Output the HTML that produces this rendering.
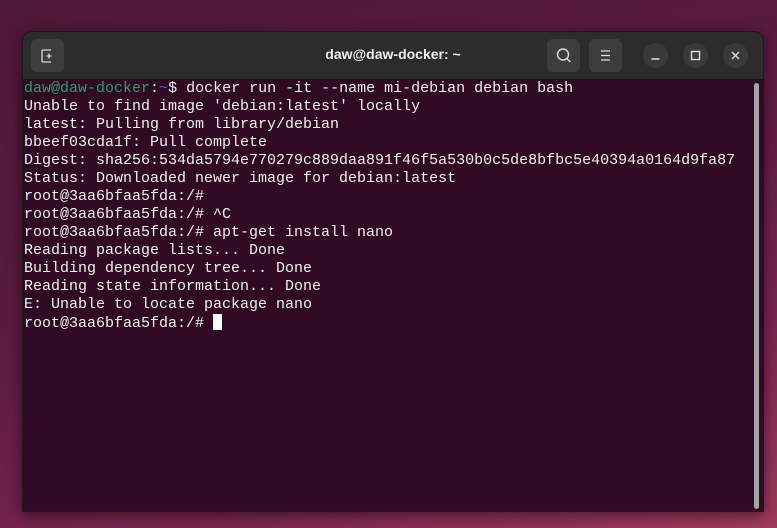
<!DOCTYPE html>
<html><head><style>
html,body{margin:0;padding:0}
body{width:777px;height:528px;overflow:hidden;position:relative;
background:linear-gradient(160deg,#4e1838 0%,#5a1a40 40%,#7a2550 75%,#a03a5a 100%);
font-family:"Liberation Sans",sans-serif}
.win{position:absolute;left:22px;top:31px;width:742px;height:481px;border-radius:10px 10px 0 0;overflow:hidden;background:#300a24;box-shadow:0 3px 14px rgba(0,0,0,.5);border:1px solid #1a1a1a;box-sizing:border-box}
.tb{position:absolute;left:0;top:0;width:100%;height:47px;background:#2c2c2c}
.title{position:absolute;left:0;right:0;top:14px;text-align:center;color:#f0f0f0;font-weight:bold;font-size:14px}
.btn{position:absolute;top:7px;width:33px;height:33px;border-radius:6px;background:#3d3d3d}
.cb{position:absolute;top:11px;width:25px;height:25px;border-radius:50%;background:#3a3a3a}
.term{position:absolute;left:1px;top:48px;font-family:"Liberation Mono",monospace;font-size:15px;line-height:18px;color:#f0f0f0;white-space:pre}
.g{color:#26a269}.b{color:#3d6fcf}
.cur{display:inline-block;width:9px;height:16px;background:#fff;vertical-align:-3px}
.sb{position:absolute;left:731px;top:51px;width:5px;height:426px;background:#a4a4a4;border-radius:3px}
</style></head><body>
<div class="win">
<div class="tb">
<div class="btn" style="left:8px"><svg width="33" height="33"><path d="M11 11v12M11 11h9M11 23h9" stroke="#ddd" fill="none" stroke-width="1.3"/><path d="M15.5 17h5M18 14.5v5" stroke="#ddd" stroke-width="1.3"/></svg></div>
<div class="title">daw@daw-docker: ~</div>
<div class="btn" style="left:524px"><svg width="33" height="33"><circle cx="16" cy="15.5" r="5.5" stroke="#ddd" fill="none" stroke-width="1.4"/><path d="M19.8 19.5l3.5 3.5" stroke="#ddd" stroke-width="1.4"/></svg></div>
<div class="btn" style="left:566px"><svg width="33" height="33"><path d="M12 12h9M12 16.5h9M12 21h9" stroke="#ddd" stroke-width="1.3"/></svg></div>
<div class="cb" style="left:620px"><svg width="25" height="25"><path d="M8.5 16h8" stroke="#ddd" stroke-width="1.4"/></svg></div>
<div class="cb" style="left:660px"><svg width="25" height="25"><rect x="8.5" y="8.5" width="8" height="8" stroke="#ddd" fill="none" stroke-width="1.4"/></svg></div>
<div class="cb" style="left:700px"><svg width="25" height="25"><path d="M9 9l7 7M16 9l-7 7" stroke="#ddd" stroke-width="1.4"/></svg></div>
</div>
<div class="term"><span class="g">daw@daw-docker</span>:<span class="b">~</span>$ docker run -it --name mi-debian debian bash
Unable to find image 'debian:latest' locally
latest: Pulling from library/debian
bbeef03cda1f: Pull complete
Digest: sha256:534da5794e770279c889daa891f46f5a530b0c5de8bfbc5e40394a0164d9fa87
Status: Downloaded newer image for debian:latest
root@3aa6bfaa5fda:/#
root@3aa6bfaa5fda:/# ^C
root@3aa6bfaa5fda:/# apt-get install nano
Reading package lists... Done
Building dependency tree... Done
Reading state information... Done
E: Unable to locate package nano
root@3aa6bfaa5fda:/# <span class="cur"></span></div>
<div class="sb"></div>
</div>
</body></html>
